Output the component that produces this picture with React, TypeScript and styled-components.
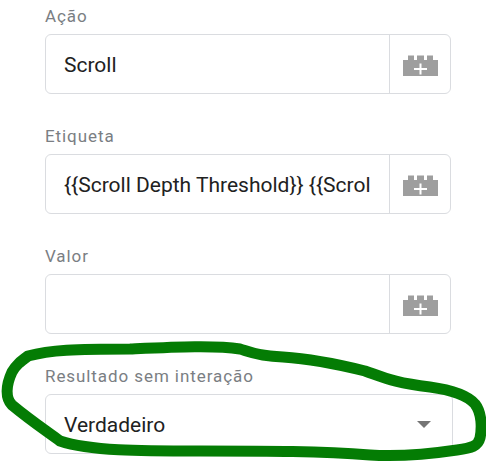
import styled, { createGlobalStyle } from 'styled-components';

const GlobalStyle = createGlobalStyle`
  html, body {
    margin: 0;
    padding: 0;
    background: #fff;
    font-family: Roboto, "Liberation Sans", sans-serif;
  }
`;

const Page = styled.div`
  position: relative;
  width: 486px;
  height: 473px;
  overflow: hidden;
  padding: 5px 0 0 45px;
  box-sizing: border-box;
`;

const Field = styled.div`
  margin-bottom: 31px;
`;

const Label = styled.div`
  height: 29px;
  line-height: 23px;
  font-size: 17px;
  letter-spacing: 0.92px;
  color: #7a7e83;
`;

const InputBox = styled.div<{ $wide?: boolean }>`
  display: flex;
  width: ${(p) => (p.$wide ? '408px' : '406px')};
  height: 60px;
  box-sizing: border-box;
  border: 1px solid #dadce0;
  border-radius: 6px;
  background: #fff;
`;

const Value = styled.div`
  flex: 1;
  min-width: 0;
  padding: 0 18px;
  line-height: 60px;
  font-size: 21px;
  color: #212121;
  white-space: nowrap;
`;

const VariableButton = styled.div`
  width: 61px;
  flex: none;
  box-sizing: border-box;
  display: flex;
  align-items: center;
  justify-content: center;
  border-left: 1px solid #dadce0;
`;

const Caret = styled.div`
  width: 0;
  height: 0;
  margin: 1px 21px 0 0;
  align-self: center;
  border-left: 7px solid transparent;
  border-right: 7px solid transparent;
  border-top: 7px solid #757575;
`;

const Scribble = styled.svg`
  position: absolute;
  left: 0;
  top: 0;
  pointer-events: none;
`;

function BrickIcon() {
  return (
    <svg width="35" height="24" viewBox="0 0 35 24">
      <path
        fill="#9e9e9e"
        d="M0 8h5V3.500h6V8h3V3.500h7V8h3V3.500h6V8h5v16H0z"
      />
      <path fill="#fff" d="M16.500 11.500h2V16H24v2h-5.500v4.500h-2V18H11v-2h5.500z" />
    </svg>
  );
}

function App() {
  return (
    <Page>
      <GlobalStyle />
      <Field>
        <Label>Ação</Label>
        <InputBox>
          <Value>Scroll</Value>
          <VariableButton><BrickIcon /></VariableButton>
        </InputBox>
      </Field>
      <Field>
        <Label>Etiqueta</Label>
        <InputBox>
          <Value>{'{{Scroll Depth Threshold}} {{Scrol'}</Value>
          <VariableButton><BrickIcon /></VariableButton>
        </InputBox>
      </Field>
      <Field>
        <Label>Valor</Label>
        <InputBox>
          <Value />
          <VariableButton><BrickIcon /></VariableButton>
        </InputBox>
      </Field>
      <Field>
        <Label>Resultado sem interação</Label>
        <InputBox $wide>
          <Value>Verdadeiro</Value>
          <Caret />
        </InputBox>
      </Field>
      <Scribble width="486" height="473" viewBox="0 0 486 473">
        <path
          fill="none"
          stroke="#047c04"
          strokeWidth="11"
          strokeLinejoin="round"
          d="M28 356C50 350 75 349 130 349C175 347 215 345 240 349C250 352 258 356 283 357C315 359 345 366 365 371C385 378 395 383 430 387C452 390 468 396 475 404C482 413 482 428 480 438C478 446 472 448 457 450C430 454 400 457 370 455C320 451 270 451 200 451C140 451 90 451 60 441C45 430 30 420 12 405C5 398 6 385 12 372C16 365 20 362 28 356Z"
        />
      </Scribble>
    </Page>
  );
}

export default App;
